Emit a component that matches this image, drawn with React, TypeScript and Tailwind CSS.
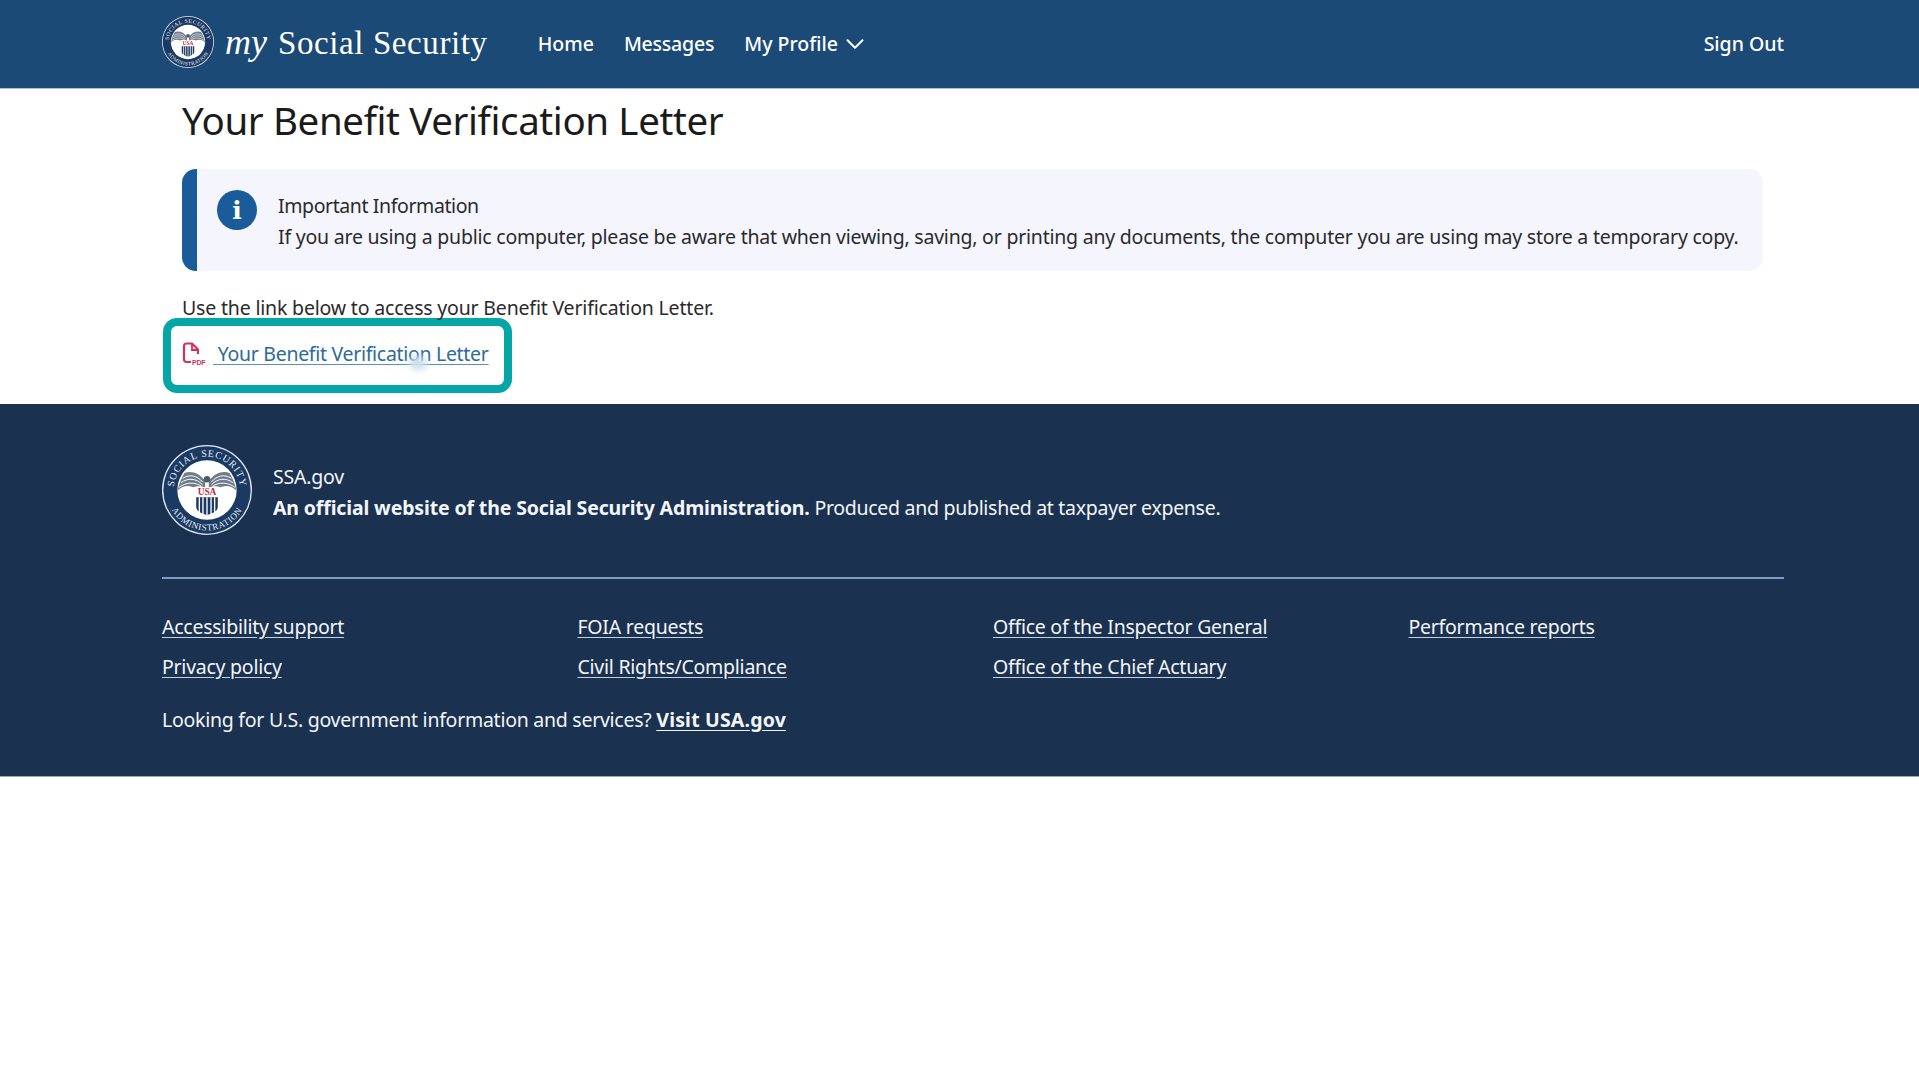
import { ChevronDown } from 'lucide-react'

const footerLinks = [
  ['Accessibility support', 'Privacy policy'],
  ['FOIA requests', 'Civil Rights/Compliance'],
  ['Office of the Inspector General', 'Office of the Chief Actuary'],
  ['Performance reports'],
]

function Seal({ id, className }: { id: string; className: string }) {
  return (
    <svg viewBox="0 0 100 100" className={className}>
      <circle cx="50" cy="50" r="50" fill="#dfe6ee" />
      <circle cx="50" cy="50" r="48.5" fill="#1b3a63" />
      <circle cx="50" cy="50" r="33" fill="#ffffff" />
      <defs>
        <path id={`${id}-top`} d="M 14.26 59.6 A 37 37 0 1 1 85.74 59.6" />
        <path id={`${id}-bottom`} d="M 5 50 A 45 45 0 0 0 95 50" />
      </defs>
      <text fontFamily="Liberation Serif, serif" fontSize="11" fill="#e8edf3" letterSpacing="0.9">
        <textPath href={`#${id}-top`} startOffset="50%" textAnchor="middle">SOCIAL SECURITY</textPath>
      </text>
      <text fontFamily="Liberation Serif, serif" fontSize="10" fill="#e8edf3" letterSpacing="0.7">
        <textPath href={`#${id}-bottom`} startOffset="50%" textAnchor="middle">ADMINISTRATION</textPath>
      </text>
      {/* wings */}
      <path d="M48 40 C42 31 32 28 25 31 C21 37 19 44 17 51 C24 44 30 45 35 47 C39 45 44 46 48 47 Z" fill="#6f7c8b" />
      <path d="M52 40 C58 31 68 28 75 31 C79 37 81 44 83 51 C76 44 70 45 65 47 C61 45 56 46 52 47 Z" fill="#6f7c8b" />
      <path d="M23 37 C31 32 39 34 45 41 M21 42 C29 36 38 37 45 44 M19 47 C27 41 37 41 44 46 M77 37 C69 32 61 34 55 41 M79 42 C71 36 62 37 55 44 M81 47 C73 41 63 41 56 46" fill="none" stroke="#ffffff" strokeWidth="1.1" />
      <circle cx="50" cy="38" r="3.6" fill="#4f5b6a" />
      <text x="50" y="56" textAnchor="middle" fontFamily="Liberation Serif, serif" fontWeight="700" fontSize="10.5" fill="#c22b3b">USA</text>
      {/* shield stripes */}
      <path d="M38 58 H62 V69 C62 74 55 76 50 78 C45 76 38 74 38 69 Z" fill="#1b3a63" />
      <path d="M41.5 58 V75 M45.5 58 V77 M50 58 V78 M54.5 58 V77 M58.5 58 V75" stroke="#ffffff" strokeWidth="1.5" />
    </svg>
  )
}

function PdfIcon() {
  return (
    <svg viewBox="0 0 24 24" className="h-[24px] w-[24px] shrink-0">
      <path d="M9 20H4.5C3 20 2 19 2 17.5V4C2 2.500 3 1.500 4.500 1.500H10L16 7.500V12" fill="none" stroke="#d0325f" strokeWidth="2.2" strokeLinejoin="round" />
      <path d="M10 2V8H16" fill="none" stroke="#d0325f" strokeWidth="1.8" />
      <text x="10" y="22.500" fontFamily="Liberation Sans, sans-serif" fontWeight="700" fontSize="7" fill="#d0325f">PDF</text>
    </svg>
  )
}

export default function App() {
  return (
    <div className="min-h-[1079px] bg-white font-['Noto_Sans',sans-serif] text-[#1b1b1b]">
      {/* Header */}
      <header className="flex h-[89px] items-center justify-between border-b border-[#a9c0d8] bg-[#1c4a76] pl-[162px] pr-[135px] text-white">
        <div className="flex items-center">
          <Seal id="head" className="-mt-[5px] h-[52px] w-[52px]" />
          <span className="ml-[11px] -mt-[4px] font-['Liberation_Serif',serif] text-[33px] leading-none tracking-[0.6px]">
            <em className="mr-[11px] text-[36px] tracking-normal">my</em>Social Security
          </span>
          <nav className="ml-[50px] flex items-center gap-[30px] text-[19.5px] font-medium">
            <a>Home</a>
            <a className="tracking-[-0.2px]">Messages</a>
            <a className="flex items-center gap-[2px]">
              My Profile
              <ChevronDown size={30} strokeWidth={1.6} className="-my-[4px]" />
            </a>
          </nav>
        </div>
        <a className="text-[19.5px] font-medium">Sign Out</a>
      </header>

      {/* Main */}
      <main className="pb-[11px] pl-[162px] pr-[135px] text-[19.5px] tracking-[-0.18px]">
        <h1 className="ml-[20px] pt-[6px] text-[38.5px] font-normal leading-[50px] tracking-[-0.38px] text-[#1b1b1b]">
          Your Benefit Verification Letter
        </h1>
        <div className="ml-[20px] mr-[21px] mt-[24px] flex h-[102px] items-start rounded-[14px] border-l-[15px] border-[#1a5c9a] bg-[#f5f5fe] pl-[20px] pt-[21px]">
          <span className="flex h-[40px] w-[40px] shrink-0 items-center justify-center rounded-full bg-[#1a5c9a] font-['DejaVu_Serif',serif] text-[25px] font-bold leading-none text-white">
            i
          </span>
          <div className="ml-[21px] leading-[31px] text-[#2a2a2a]">
            <p className="tracking-[-0.4px]">Important Information</p>
            <p className="tracking-[-0.22px]">
              If you are using a public computer, please be aware that when viewing, saving, or printing any documents, the computer you are using may store a temporary copy.
            </p>
          </div>
        </div>
        <p className="ml-[20px] mt-[23px] leading-[28px] text-[#2a2a2a]">
          Use the link below to access your Benefit Verification Letter.
        </p>
        <div className="mt-[-4px] ml-[1px] flex h-[75px] w-[349px] items-center rounded-[14px] border-[8px] border-[#07a6a6] pb-[4px] pl-[11px]">
          <PdfIcon />
          <a className="relative ml-[7px] tracking-[-0.3px] text-[#2d6a9a] underline decoration-[#5f8fb5] underline-offset-[3px]">
            {'\u00a0'}Your Benefit Verification Letter
            <span className="absolute left-[196px] top-[17px] h-[14px] w-[18px] rounded-full bg-[#cfe0ea] blur-[3px]" />
          </a>
        </div>
      </main>

      {/* Footer */}
      <footer className="h-[373px] border-b border-[#9aa5b5] bg-[#1a3150] pl-[162px] pr-[135px] pt-[41px] text-[19.5px] tracking-[-0.2px] text-[#f3f6fa]">
        <div className="flex items-center border-b-2 border-[#7f9cc4] pb-[42px]">
          <Seal id="foot" className="h-[90px] w-[90px]" />
          <div className="ml-[21px] pt-[3px] leading-[31px]">
            <p>SSA.gov</p>
            <p className="tracking-[-0.285px]">
              <strong className="font-bold tracking-[-0.14px]">An official website of the Social Security Administration.</strong>{' '}
              Produced and published at taxpayer expense.
            </p>
          </div>
        </div>
        <div className="mt-[34px] grid grid-cols-[415.5px_415.5px_415.5px_1fr] tracking-[-0.25px]">
          {footerLinks.map((col) => (
            <div key={col[0]} className="flex flex-col gap-[12px]">
              {col.map((label) => (
                <a key={label} className="leading-[28px] underline decoration-[#c5d0de] underline-offset-[3px]">
                  {label}
                </a>
              ))}
            </div>
          ))}
        </div>
        <p className="mt-[25px] leading-[28px] tracking-[-0.26px]">
          Looking for U.S. government information and services?{' '}
          <a className="font-bold tracking-[0.18px] underline underline-offset-[3px]">Visit USA.gov</a>
        </p>
      </footer>
    </div>
  )
}
